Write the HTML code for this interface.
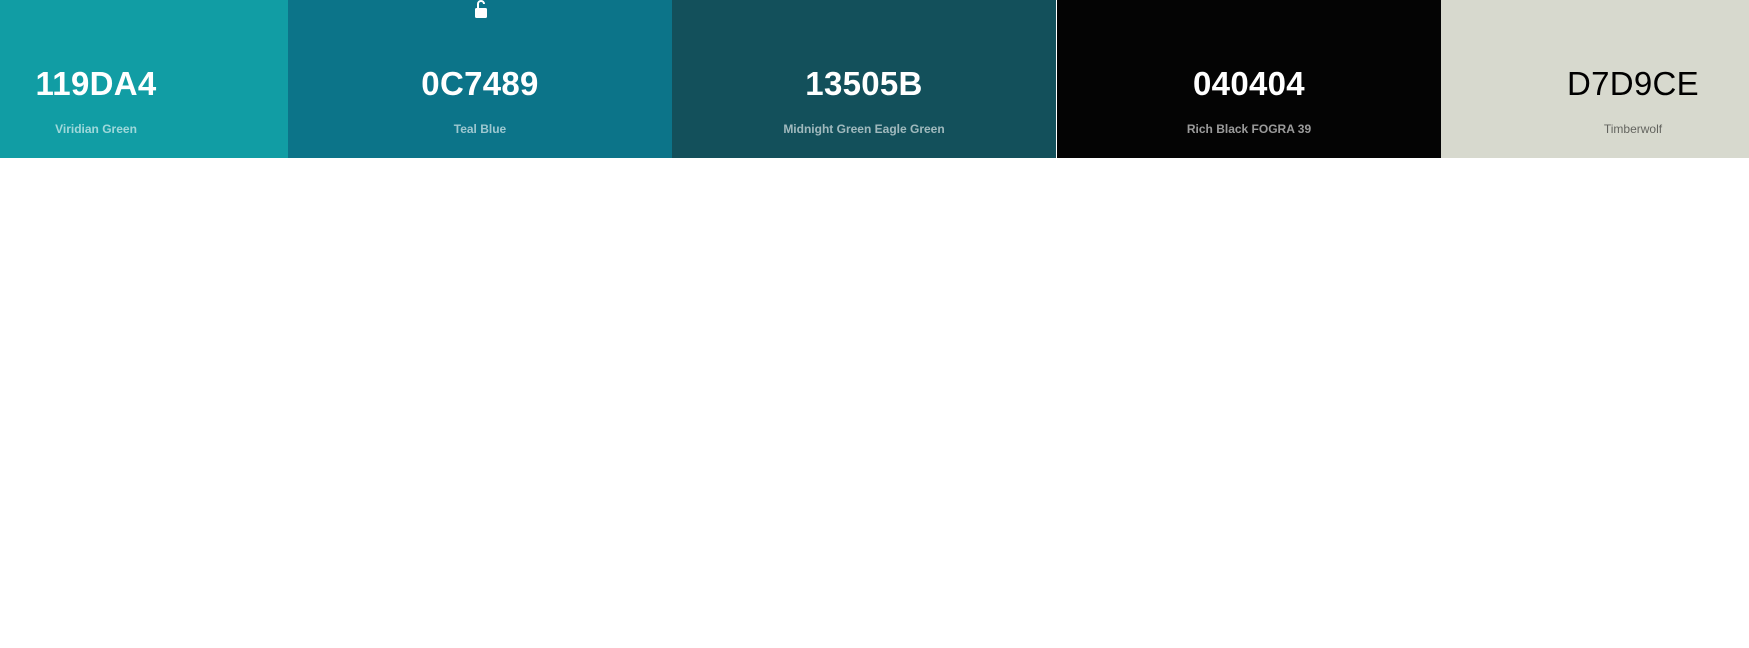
<!DOCTYPE html>
<html><head><style>
html,body{margin:0;padding:0;width:1749px;height:648px;background:#fff;overflow:hidden;font-family:"Liberation Sans",sans-serif}
.p{position:absolute;top:0;height:158px;width:384px;text-align:center}
.h{position:absolute;left:0;right:0;top:63px;font-size:33px;font-weight:bold;letter-spacing:0.3px;line-height:42px}
.n{position:absolute;left:0;right:0;top:122px;font-size:12px;font-weight:bold;line-height:14px}
</style></head><body>
<div class="p" style="left:-96px;background:#119DA4"><div class="h" style="color:#fff">119DA4</div><div class="n" style="color:rgba(255,255,255,.6)">Viridian Green</div></div>
<div class="p" style="left:288px;background:#0C7489">
<svg style="position:absolute;left:186px;top:0" width="14" height="19" viewBox="0 0 14 19"><path d="M4 8V4a3 3 0 0 1 6 0" fill="none" stroke="#fff" stroke-width="2"/><rect x="1" y="8" width="12" height="10" rx="1.5" fill="#fff"/></svg>
<div class="h" style="color:#fff">0C7489</div><div class="n" style="color:rgba(255,255,255,.6)">Teal Blue</div></div>
<div class="p" style="left:672px;background:#13505B"><div class="h" style="color:#fff">13505B</div><div class="n" style="color:rgba(255,255,255,.6)">Midnight Green Eagle Green</div></div>
<div class="p" style="left:1057px;background:#040404"><div class="h" style="color:#fff">040404</div><div class="n" style="color:rgba(255,255,255,.6)">Rich Black FOGRA 39</div></div>
<div class="p" style="left:1441px;width:308px;background:#D7D9CE"><div style="position:absolute;left:0;width:384px;top:0;height:158px"><div class="h" style="color:#000;font-weight:normal">D7D9CE</div><div class="n" style="color:rgba(0,0,0,.55);font-weight:normal">Timberwolf</div></div></div>
</body></html>
